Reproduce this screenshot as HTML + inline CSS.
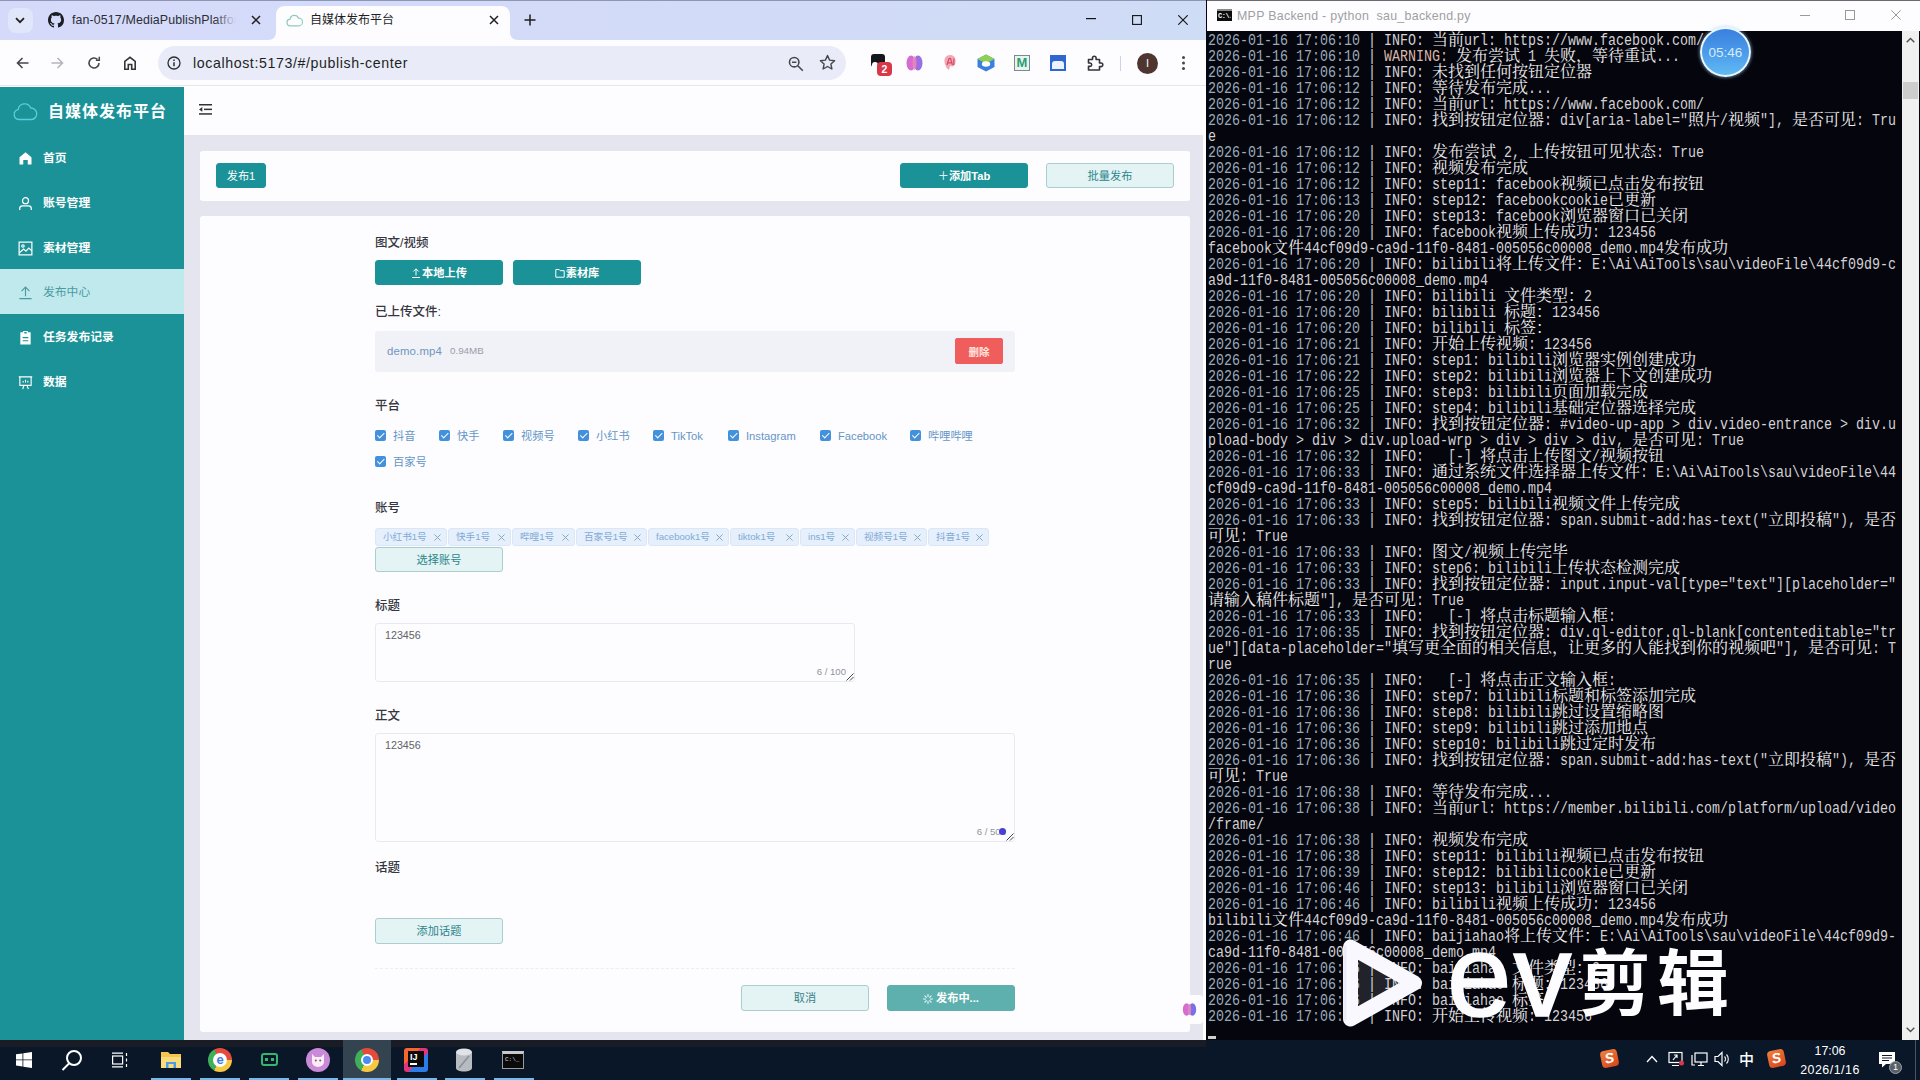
<!DOCTYPE html>
<html lang="zh-CN">
<head>
<meta charset="utf-8">
<title>自媒体发布平台</title>
<style>
*{box-sizing:border-box;margin:0;padding:0}
html,body{width:1920px;height:1080px;overflow:hidden;background:#fff}
body{position:relative;font-family:"Liberation Sans","Noto Sans CJK SC",sans-serif;font-size:11.2px;color:#303133;-webkit-font-smoothing:antialiased}
.abs{position:absolute}
svg{display:block}

/* ---------- Chrome window ---------- */
#chrome{position:absolute;left:0;top:0;width:1206px;height:1040px;background:#fff;overflow:hidden}
#chrome:after{content:'';position:absolute;left:0;top:0;width:1206px;height:1px;background:#8d97b4}
#tabstrip{position:absolute;left:0;top:0;width:1206px;height:40px;background:linear-gradient(90deg,#d6dafa,#cfdcf6)}
#toolbar{position:absolute;left:0;top:40px;width:1206px;height:46px;background:#fdfdff;border-bottom:1px solid #e4e4ec}
#omni{position:absolute;left:158px;top:6px;width:688px;height:34px;border-radius:17px;background:#e9ecf8}
.tabtxt{position:absolute;top:12px;font-size:12px;color:#1f1f1f;white-space:nowrap;line-height:16px}

/* ---------- Page ---------- */
#page{position:absolute;left:0;top:87px;width:1203px;height:953px;background:#e5e5f0;overflow:hidden}
#side{position:absolute;left:0;top:0;width:184px;height:953px;background:#1b9297}
#logo{position:absolute;left:48px;top:14px;font-size:16px;font-weight:700;color:#fff;letter-spacing:1px;line-height:22px;white-space:nowrap}
.mi{position:absolute;left:0;width:184px;height:45px;color:#fff;font-size:11.8px;font-weight:700;line-height:46.500px;white-space:nowrap}
.mi span{position:absolute;left:43px;top:0}
.mi svg{position:absolute;left:18px;top:16px}
.mi.act{background:#c0e9ed;color:#4a9aa1;font-weight:400}
#hdr{position:absolute;left:184px;top:0;width:1021px;height:48px;background:#fdfdff}
.card{position:absolute;background:#fdfdff;border-radius:3px}
.btn{position:absolute;height:25px;border-radius:3px;font-size:11.2px;line-height:23px;padding-top:1px;text-align:center;white-space:nowrap;border:1px solid #1b9297;background:#1b9297;color:#fff;font-weight:700}
.btn.plain{background:#e4f4f5;border-color:#a9cdd0;color:#2b858b;font-weight:400}
.lbl{position:absolute;left:375px;font-size:12.5px;line-height:19px;color:#36363e;white-space:nowrap;font-weight:500}
.cb{position:absolute;height:12px;white-space:nowrap;font-size:11.2px;line-height:12px;color:#6595c6}
.cb i{position:absolute;left:0;top:0;width:11px;height:11px;border-radius:2px;background:#4390dc;display:block}
.cb i:after{content:"";position:absolute;left:3.6px;top:1.2px;width:2.6px;height:5.6px;border:solid #fff;border-width:0 1.2px 1.2px 0;transform:rotate(45deg)}
.cb span{position:absolute;left:18px;top:0}
.tag{position:absolute;top:528px;height:18px;background:#e6effc;border:1px solid #dbe7f8;border-radius:3px;font-size:9.6px;line-height:16px;color:#7fabd6;white-space:nowrap;padding-left:7px}
.tag b{position:absolute;right:6px;top:0;font-weight:400;font-size:11px;color:#7a9cc0}
.ta{position:absolute;border:1px solid #e9e9f3;border-radius:3px;background:#fdfdff}
.ta .v{position:absolute;left:9px;top:4px;font-size:10.7px;color:#606266;line-height:14px}
.ta .n{position:absolute;right:8px;bottom:3px;font-size:9.6px;color:#909399;line-height:12px}

/* ---------- Terminal ---------- */
#term{position:absolute;left:1206px;top:0;width:714px;height:1040px;background:#05050d}
#ttitle{position:absolute;left:1px;top:0;width:713px;height:31px;background:#fdfdff;border-top:1px solid #6a6a72}
#tscroll{position:absolute;left:696px;top:31px;width:17px;height:1009px;background:#f0f0f0}
#tbody{position:absolute;left:2px;top:31px;width:690px;height:1009px;overflow:hidden;color:#d2d2d4}
.r{position:absolute;left:0;height:16px;line-height:16px;white-space:pre;font-family:"Liberation Mono","Noto Serif CJK SC",monospace;font-size:16px}
.r .l{display:inline-block;height:16px;white-space:pre;transform:scaleX(.8333);transform-origin:0 0;width:calc(var(--n)*8px);vertical-align:top}
.r .c{position:relative;top:0px;color:#f0f0f0;display:inline-block;height:16px;width:calc(var(--n)*16px);vertical-align:top;font-family:"Liberation Mono","Noto Serif CJK SC",serif;font-size:16px;font-weight:400;white-space:pre}
.r .t{color:#97acb8}
.r .w{color:#d9b8a6}

/* ---------- Taskbar ---------- */
#task{position:absolute;left:0;top:1040px;width:1920px;height:40px;background:#0a1728}
</style>
</head>
<body>

<!-- ================= CHROME ================= -->
<div id="chrome">
<div id="tabstrip">
  <!-- tab search -->
  <div class="abs" style="left:8px;top:8px;width:25px;height:25px;border-radius:8px;background:#e0e7fa"></div>
  <svg class="abs" style="left:15px;top:17px" width="10" height="7" viewBox="0 0 10 7" fill="none" stroke="#1f1f1f" stroke-width="1.700"><path d="M1 1.200 5 5.200l4-4"/></svg>
  <!-- tab 1 -->
  <svg class="abs" style="left:48px;top:12px" width="16" height="16" viewBox="0 0 16 16"><path fill="#1b1f23" d="M8 0C3.580 0 0 3.580 0 8c0 3.540 2.290 6.530 5.470 7.590.4.070.55-.17.55-.38 0-.19-.01-.82-.01-1.490-2.010.37-2.530-.49-2.690-.94-.09-.23-.48-.94-.82-1.130-.28-.15-.68-.52-.01-.53.63-.01 1.080.58 1.230.82.720 1.210 1.870.87 2.330.66.070-.52.280-.87.510-1.070-1.780-.2-3.640-.89-3.640-3.950 0-.87.310-1.590.820-2.150-.08-.2-.36-1.020.080-2.120 0 0 .67-.21 2.200.82.640-.18 1.320-.27 2-.27s1.360.09 2 .27c1.530-1.040 2.200-.82 2.200-.82.440 1.100.16 1.920.080 2.120.51.56.820 1.270.820 2.150 0 3.070-1.870 3.750-3.650 3.950.29.25.54.73.54 1.480 0 1.070-.01 1.930-.01 2.200 0 .21.15.46.55.38A8.010 8.010 0 0 0 16 8c0-4.420-3.580-8-8-8z"/></svg>
  <div class="tabtxt" style="left:72px;width:166px;overflow:hidden;font-size:12.400px;letter-spacing:.12px;color:#2a2d35">fan-0517/MediaPublishPlatform</div>
  <div class="abs" style="left:214px;top:10px;width:26px;height:20px;background:linear-gradient(90deg,rgba(214,218,250,0),#d6dafa 85%)"></div>
  <svg class="abs" style="left:251px;top:15px" width="10" height="10" viewBox="0 0 10 10" stroke="#1f1f1f" stroke-width="1.500"><path d="M1 1l8 8M9 1 1 9"/></svg>
  <!-- active tab -->
  <svg class="abs" style="left:268px;top:6px" width="250" height="34" viewBox="0 0 250 34"><path fill="#fdfdff" d="M0 34c5 0 8-3 8-8V9c0-5 3-9 9-9h216c6 0 9 4 9 9v17c0 5 3 8 8 8z"/></svg>
  <svg class="abs" style="left:286px;top:13px" width="17" height="14" viewBox="0 0 17 14" fill="none" stroke="#8fcdb2" stroke-width="1.200" stroke-linejoin="round"><path d="M4.500 12.800a3.300 3.300 0 0 1-.4-6.600 4.300 4.300 0 0 1 8.300-1 3.800 3.800 0 0 1 .6 7.600z"/></svg>
  <div class="tabtxt" style="left:310px;color:#1f1f1f">自媒体发布平台</div>
  <svg class="abs" style="left:489px;top:15px" width="10" height="10" viewBox="0 0 10 10" stroke="#1f1f1f" stroke-width="1.500"><path d="M1 1l8 8M9 1 1 9"/></svg>
  <svg class="abs" style="left:524px;top:14px" width="12" height="12" viewBox="0 0 12 12" stroke="#1f1f1f" stroke-width="1.500"><path d="M6 .5v11M.5 6h11"/></svg>
  <!-- window controls -->
  <svg class="abs" style="left:1086px;top:18px" width="10" height="2" viewBox="0 0 10 2"><rect width="10" height="1.200" fill="#111"/></svg>
  <svg class="abs" style="left:1132px;top:15px" width="10" height="10" viewBox="0 0 10 10" fill="none" stroke="#111" stroke-width="1.100"><rect x=".6" y=".6" width="8.800" height="8.800"/></svg>
  <svg class="abs" style="left:1178px;top:15px" width="10" height="10" viewBox="0 0 10 10" stroke="#111" stroke-width="1.100"><path d="M.3.3l9.400 9.400M9.700.3.300 9.700"/></svg>
</div>

<div id="toolbar">
  <!-- nav -->
  <svg class="abs" style="left:16px;top:17px" width="13" height="12" viewBox="0 0 13 12" fill="none" stroke="#45474d" stroke-width="1.600"><path d="M12.500 6H1.500M6.500 1 1.500 6l5 5"/></svg>
  <svg class="abs" style="left:51px;top:17px" width="13" height="12" viewBox="0 0 13 12" fill="none" stroke="#b4b6bf" stroke-width="1.600"><path d="M.5 6h11M6.500 1l5 5-5 5"/></svg>
  <svg class="abs" style="left:87px;top:16px" width="14" height="14" viewBox="0 0 14 14" fill="none" stroke="#45474d" stroke-width="1.600"><path d="M12 7a5 5 0 1 1-1.600-3.700"/><path d="M12.300.8v3.400H8.900" stroke-width="1.500"/></svg>
  <svg class="abs" style="left:123px;top:16px" width="14" height="14" viewBox="0 0 14 14" fill="none" stroke="#33353b" stroke-width="1.600"><path d="M1.800 13.200V5.500L7 1.300l5.200 4.200v7.700H8.700V8.500H5.300v4.700z"/></svg>
  <div id="omni">
    <svg class="abs" style="left:9px;top:10px" width="14" height="14" viewBox="0 0 14 14" fill="none" stroke="#2b2d33" stroke-width="1.300"><circle cx="7" cy="7" r="6"/><path d="M7 6.300v4M7 3.600v1.300" stroke-width="1.500"/></svg>
    <div class="abs" style="left:35px;top:8px;font-size:14.200px;line-height:18px;color:#1f1f1f;white-space:nowrap;letter-spacing:.6px">localhost:5173/#/publish-center</div>
    <svg class="abs" style="left:630px;top:10px" width="16" height="16" viewBox="0 0 16 16" fill="none" stroke="#45474d" stroke-width="1.600"><circle cx="6.200" cy="6.200" r="4.700"/><path d="M9.800 9.800l5 5M4 6.200h4.400" /></svg>
    <svg class="abs" style="left:661px;top:8px" width="17" height="17" viewBox="0 0 17 17" fill="none" stroke="#45474d" stroke-width="1.400" stroke-linejoin="round"><path d="M8.500 1.500l2.100 4.600 5 .6-3.700 3.400 1 4.900-4.400-2.500-4.400 2.500 1-4.900L1.400 6.700l5-.6z"/></svg>
  </div>
  <!-- extensions -->
  <div class="abs" style="left:871px;top:14px;width:14px;height:13px;border-radius:3px;background:#16161c"></div>
  <div class="abs" style="left:872px;top:22px;width:6px;height:5px;border-radius:3px 3px 0 0;background:#fff"></div>
  <div class="abs" style="left:877px;top:22px;width:15px;height:14px;border-radius:4px;background:#d93848;color:#fff;font-size:10.500px;font-weight:700;line-height:14px;text-align:center">2</div>
  <svg class="abs" style="left:906px;top:14px" width="17" height="18" viewBox="0 0 17 18"><ellipse cx="5" cy="9" rx="4.500" ry="7.500" fill="#d66bd0"/><ellipse cx="12" cy="9" rx="4.500" ry="7.500" fill="#9a6fe0"/><ellipse cx="8.500" cy="9" rx="2" ry="7" fill="#f08ab8" opacity=".8"/></svg>
  <svg class="abs" style="left:943px;top:14px" width="14" height="18" viewBox="0 0 14 18"><path d="M7 1C3.500 1 1 4 1.500 8c.3 2.500 1.500 4 2 6l2.500 2 1-4 3 .5c2-1 3-4 2.500-7C12 2.500 10 1 7 1z" fill="#f2a8b0"/><path d="M4 11 6 4.500h1.500L9.500 11M4.800 8.800h3.800M10.800 4.500V11" stroke="#d94a6a" stroke-width="1.200" fill="none"/></svg>
  <svg class="abs" style="left:976px;top:14px" width="20" height="18" viewBox="0 0 20 18"><path d="M10 .5 18.500 5v8L10 17.500 1.500 13V5z" fill="#3b7fe0"/><path d="M10 .5 18.500 5 10 9.500 1.500 5z" fill="#8fd14f"/><ellipse cx="10" cy="10" rx="4.200" ry="2.800" fill="#fdfdff"/></svg>
  <div class="abs" style="left:1014px;top:15px;width:16px;height:16px;border:1px solid #7a8a90;background:#e8f4f0;color:#2f9e6e;font-size:13px;font-weight:700;line-height:14px;text-align:center">M</div>
  <div class="abs" style="left:1050px;top:15px;width:16px;height:16px;background:#2f66d0"></div>
  <div class="abs" style="left:1052px;top:21px;width:12px;height:8px;background:#eef2fb;border-radius:3px 3px 0 0"></div>
  <svg class="abs" style="left:1086px;top:14px" width="18" height="18" viewBox="0 0 18 18" fill="none" stroke="#33353b" stroke-width="1.600" stroke-linejoin="round"><path d="M2.500 5.500h4V4a1.800 1.800 0 0 1 3.600 0v1.500h3.400V9H15a1.800 1.800 0 0 1 0 3.600h-1.500v3.400h-11v-3.600H4A1.700 1.700 0 0 0 4 9H2.500z"/></svg>
  <div class="abs" style="left:1120px;top:16px;width:1px;height:15px;background:#c9d3ea"></div>
  <div class="abs" style="left:1137px;top:13px;width:21px;height:21px;border-radius:50%;background:#4f3530;color:#fff;font-size:11px;line-height:21px;text-align:center">I</div>
  <div class="abs" style="left:1182px;top:16px;width:3px;height:3px;border-radius:50%;background:#45474d;box-shadow:0 5.500px 0 #45474d,0 11px 0 #45474d"></div>
</div>

<div id="page">
<div id="side">
  <svg class="abs" style="left:12px;top:12px" width="26" height="24" viewBox="0 0 26 24" fill="none" stroke="#55d0dc" stroke-width="1.3" stroke-linejoin="round"><path d="M7 20.5a5 5 0 0 1-.8-9.9 6.5 6.5 0 0 1 12.5-1.6 5.8 5.8 0 0 1 1.300 11.500z"/></svg>
  <div id="logo">自媒体发布平台</div>

  <div class="mi" style="top:48px"><svg width="15" height="15" viewBox="0 0 16 16"><path fill="#fff" d="M8 1.200 1.600 6.700V14.500h4V9.600h4.800v4.900h4V6.700z"/></svg><span>首页</span></div>
  <div class="mi" style="top:93px"><svg width="15" height="15" viewBox="0 0 16 16" fill="none" stroke="#fff" stroke-width="1.300"><circle cx="8" cy="5" r="3.200"/><path d="M1.800 15v-1.500a3 3 0 0 1 3-3h6.400a3 3 0 0 1 3 3V15"/></svg><span>账号管理</span></div>
  <div class="mi" style="top:138px"><svg width="15" height="15" viewBox="0 0 16 16" fill="none" stroke="#fff" stroke-width="1.300"><rect x="1.200" y="1.200" width="13.600" height="13.600"/><circle cx="5.300" cy="5.300" r="1.300"/><path d="M1.500 12.500 6 8.500l2.500 2.300 3-3.300 3.300 3"/></svg><span>素材管理</span></div>
  <div class="mi act" style="top:182px"><svg width="15" height="15" viewBox="0 0 16 16" fill="none" stroke="#4a9aa1" stroke-width="1.200"><path d="M1.500 14.500h13M8 12V2.500M3.800 6.500 8 2.300l4.200 4.200"/></svg><span>发布中心</span></div>
  <div class="mi" style="top:227px"><svg width="15" height="15" viewBox="0 0 16 16"><path fill="#fff" d="M5.500 1h5v1.500h3V15.500h-11V2.500h3zM6.700 2.200v1.600h2.600V2.200zM5 7.500v1.200h6V7.500zM5 10.800V12h6v-1.200z"/></svg><span>任务发布记录</span></div>
  <div class="mi" style="top:272px"><svg width="15" height="15" viewBox="0 0 16 16" fill="none" stroke="#fff" stroke-width="1.200"><path d="M.8 2h14.400M2 2v9h12V2M5 15l1.300-4M11 15l-1.300-4M5.500 8V6.500M8 8V5M10.500 8V6"/></svg><span>数据</span></div>
</div>

<div id="hdr">
  <svg class="abs" style="left:15px;top:17px" width="13" height="11" viewBox="0 0 13 11" fill="#303133"><rect x="0" y="0" width="13" height="1.500"/><rect x="5" y="4.600" width="8" height="1.500"/><rect x="0" y="9.200" width="13" height="1.500"/><path d="M0 5.400 3.300 3v4.800z"/></svg>
</div>

<!-- tab card -->
<div class="card" style="left:200px;top:64px;width:990px;height:50px"></div>
<div class="btn" style="left:216px;top:76px;width:50px;height:25px;font-weight:400">发布1</div>
<div class="btn" style="left:900px;top:76px;width:128px"><span style="font-weight:400">＋</span>添加Tab</div>
<div class="btn plain" style="left:1046px;top:76px;width:128px">批量发布</div>

<!-- form card -->
<div class="card" style="left:200px;top:129px;width:990px;height:816px"></div>

<div class="lbl" style="top:147px">图文/视频</div>
<div class="btn" style="left:375px;top:173px;width:128px"><svg style="display:inline-block;vertical-align:-1px;margin-right:1px" width="10" height="10" viewBox="0 0 10 10" fill="none" stroke="#fff" stroke-width="1"><path d="M1 9.500h8M5 7.500V1M2.300 3.500 5 .8l2.700 2.700"/></svg>本地上传</div>
<div class="btn" style="left:513px;top:173px;width:128px"><svg style="display:inline-block;vertical-align:-1px;margin-right:1px" width="10" height="10" viewBox="0 0 10 10" fill="none" stroke="#fff" stroke-width="1"><path d="M.8 1.500h3.400l1 1.200h4v6.500H.8z"/></svg>素材库</div>

<div class="lbl" style="top:216px">已上传文件:</div>
<div class="abs" style="left:375px;top:244px;width:640px;height:41px;background:#f1f1f8;border-radius:3px"></div>
<div class="abs" style="left:387px;top:257px;font-size:11.4px;letter-spacing:.15px;line-height:14px;color:#6f97bd;white-space:nowrap">demo.mp4</div>
<div class="abs" style="left:450px;top:258px;font-size:9.8px;line-height:12px;color:#9a9cab;white-space:nowrap">0.94MB</div>
<div class="btn" style="left:955px;top:251px;width:48px;height:26px;line-height:24px;background:#ef5d5d;border-color:#ef5d5d;border-radius:2px;color:#ffe4dc;font-size:10.5px">删除</div>

<div class="lbl" style="top:310px">平台</div>
<div class="cb" style="left:375px;top:343px"><i></i><span>抖音</span></div>
<div class="cb" style="left:439px;top:343px"><i></i><span>快手</span></div>
<div class="cb" style="left:503px;top:343px"><i></i><span>视频号</span></div>
<div class="cb" style="left:578px;top:343px"><i></i><span>小红书</span></div>
<div class="cb" style="left:653px;top:343px"><i></i><span>TikTok</span></div>
<div class="cb" style="left:728px;top:343px"><i></i><span>Instagram</span></div>
<div class="cb" style="left:820px;top:343px"><i></i><span>Facebook</span></div>
<div class="cb" style="left:910px;top:343px"><i></i><span>哔哩哔哩</span></div>
<div class="cb" style="left:375px;top:369px"><i></i><span>百家号</span></div>

<div class="lbl" style="top:412px">账号</div>
<div class="tag" style="left:375px;top:441px;width:72px">小红书1号<svg class="abs" style="right:5px;top:5px" width="7" height="7" viewBox="0 0 7 7" stroke="#7f9fc2" stroke-width=".9" fill="none"><path d="M.4.400l6.200 6.200M6.600.400.400 6.600"/></svg></div>
<div class="tag" style="left:448px;top:441px;width:63px">快手1号<svg class="abs" style="right:5px;top:5px" width="7" height="7" viewBox="0 0 7 7" stroke="#7f9fc2" stroke-width=".9" fill="none"><path d="M.4.400l6.200 6.200M6.600.400.400 6.600"/></svg></div>
<div class="tag" style="left:512px;top:441px;width:63px">哔哩1号<svg class="abs" style="right:5px;top:5px" width="7" height="7" viewBox="0 0 7 7" stroke="#7f9fc2" stroke-width=".9" fill="none"><path d="M.4.400l6.200 6.200M6.600.400.400 6.600"/></svg></div>
<div class="tag" style="left:576px;top:441px;width:71px">百家号1号<svg class="abs" style="right:5px;top:5px" width="7" height="7" viewBox="0 0 7 7" stroke="#7f9fc2" stroke-width=".9" fill="none"><path d="M.4.400l6.200 6.200M6.600.400.400 6.600"/></svg></div>
<div class="tag" style="left:648px;top:441px;width:81px">facebook1号<svg class="abs" style="right:5px;top:5px" width="7" height="7" viewBox="0 0 7 7" stroke="#7f9fc2" stroke-width=".9" fill="none"><path d="M.4.400l6.200 6.200M6.600.400.400 6.600"/></svg></div>
<div class="tag" style="left:730px;top:441px;width:69px">tiktok1号<svg class="abs" style="right:5px;top:5px" width="7" height="7" viewBox="0 0 7 7" stroke="#7f9fc2" stroke-width=".9" fill="none"><path d="M.4.400l6.200 6.200M6.600.400.400 6.600"/></svg></div>
<div class="tag" style="left:800px;top:441px;width:55px">ins1号<svg class="abs" style="right:5px;top:5px" width="7" height="7" viewBox="0 0 7 7" stroke="#7f9fc2" stroke-width=".9" fill="none"><path d="M.4.400l6.200 6.200M6.600.400.400 6.600"/></svg></div>
<div class="tag" style="left:856px;top:441px;width:71px">视频号1号<svg class="abs" style="right:5px;top:5px" width="7" height="7" viewBox="0 0 7 7" stroke="#7f9fc2" stroke-width=".9" fill="none"><path d="M.4.400l6.200 6.200M6.600.400.400 6.600"/></svg></div>
<div class="tag" style="left:928px;top:441px;width:61px">抖音1号<svg class="abs" style="right:5px;top:5px" width="7" height="7" viewBox="0 0 7 7" stroke="#7f9fc2" stroke-width=".9" fill="none"><path d="M.4.400l6.200 6.200M6.600.400.400 6.600"/></svg></div>
<div class="btn plain" style="left:375px;top:460px;width:128px">选择账号</div>

<div class="lbl" style="top:510px">标题</div>
<div class="ta" style="left:375px;top:536px;width:480px;height:59px"><div class="v">123456</div><div class="n">6 / 100</div><svg class="abs" style="right:0;bottom:0" width="8" height="8" viewBox="0 0 8 8" stroke="#444" stroke-width="1"><path d="M.5 7.500l7-7M4 7.500 7.500 4"/></svg></div>

<div class="lbl" style="top:620px">正文</div>
<div class="ta" style="left:375px;top:646px;width:640px;height:109px"><div class="v">123456</div><div class="n">6 / 500</div><svg class="abs" style="right:0;bottom:0" width="8" height="8" viewBox="0 0 8 8" stroke="#444" stroke-width="1"><path d="M.5 7.500l7-7M4 7.500 7.500 4"/></svg></div>

<div class="lbl" style="top:772px">话题</div>
<div class="btn plain" style="left:375px;top:831px;width:128px;height:26px">添加话题</div>

<div class="abs" style="left:375px;top:881px;width:640px;height:0;border-top:1px dashed #ececf4"></div>
<div class="btn plain" style="left:741px;top:898px;width:128px;height:26px;color:#3b8087">取消</div>
<div class="btn" style="left:887px;top:898px;width:128px;height:26px;background:#5eb0af;border-color:#5eb0af"><svg style="display:inline-block;vertical-align:-1.5px;margin-right:3px" width="10" height="10" viewBox="0 0 10 10" stroke="#e8fbfb" stroke-width="1.1" stroke-linecap="round"><path d="M5 .6v2M5 7.400v2M.6 5h2M7.400 5h2M1.900 1.900l1.400 1.400M6.700 6.700l1.400 1.400M1.900 8.100l1.400-1.400M6.700 3.300l1.400-1.400"/></svg>发布中...</div>

</div>
</div>

<!-- ================= TERMINAL ================= -->
<div id="term">
<div id="ttitle">
  <div class="abs" style="left:10px;top:8px;width:15px;height:12px;background:#0c0c0c;border-top:2px solid #8a8a8a"></div>
  <div class="abs" style="left:11px;top:11px;width:13px;font-family:'Liberation Mono',monospace;font-size:7px;font-weight:700;color:#fff;line-height:8px;letter-spacing:-.5px;white-space:nowrap;overflow:hidden">C:\.</div>
  <div class="abs" style="left:30px;top:7px;font-size:12.4px;letter-spacing:.28px;line-height:16px;color:#a0a0a4;white-space:pre">MPP Backend - python  sau_backend.py</div>
  <svg class="abs" style="left:593px;top:14px" width="10" height="2" viewBox="0 0 10 2"><rect width="10" height="1" fill="#9a9a9a"/></svg>
  <svg class="abs" style="left:638px;top:9px" width="10" height="10" viewBox="0 0 10 10" fill="none" stroke="#9a9a9a" stroke-width="1"><rect x=".5" y=".5" width="9" height="9"/></svg>
  <svg class="abs" style="left:684px;top:9px" width="10" height="10" viewBox="0 0 10 10" stroke="#9a9a9a" stroke-width="1"><path d="M.3.3l9.400 9.400M9.700.3.300 9.700"/></svg>

</div>
<div id="tscroll">
  <svg class="abs" style="left:4px;top:6px" width="9" height="6" viewBox="0 0 9 6" fill="none" stroke="#505050" stroke-width="1.400"><path d="M.7 5.200 4.500 1.400l3.800 3.800"/></svg>
  <div class="abs" style="left:1px;top:51px;width:15px;height:17px;background:#cdcdcd"></div>
  <svg class="abs" style="left:4px;top:996px" width="9" height="6" viewBox="0 0 9 6" fill="none" stroke="#505050" stroke-width="1.400"><path d="M.7.8 4.500 4.600 8.300.8"/></svg>

</div>
<div id="tbody">
<div class="r" style="top:2px"><span class="l t" style="--n:19">2026-01-16 17:06:10</span><span class="l" style="--n:3"> | </span><span class="l" style="--n:6">INFO: </span><span class="c" style="--n:2">当前</span><span class="l" style="--n:11">url: https:</span><span class="l" style="--n:19">//www.facebook.com/</span></div>
<div class="r" style="top:18px"><span class="l t" style="--n:19">2026-01-16 17:06:10</span><span class="l" style="--n:3"> | </span><span class="l w" style="--n:9">WARNING: </span><span class="c" style="--n:4">发布尝试</span><span class="l" style="--n:3"> 1 </span><span class="c" style="--n:7">失败，等待重试</span><span class="l" style="--n:3">...</span></div>
<div class="r" style="top:34px"><span class="l t" style="--n:19">2026-01-16 17:06:12</span><span class="l" style="--n:3"> | </span><span class="l" style="--n:6">INFO: </span><span class="c" style="--n:10">未找到任何按钮定位器</span></div>
<div class="r" style="top:50px"><span class="l t" style="--n:19">2026-01-16 17:06:12</span><span class="l" style="--n:3"> | </span><span class="l" style="--n:6">INFO: </span><span class="c" style="--n:6">等待发布完成</span><span class="l" style="--n:3">...</span></div>
<div class="r" style="top:66px"><span class="l t" style="--n:19">2026-01-16 17:06:12</span><span class="l" style="--n:3"> | </span><span class="l" style="--n:6">INFO: </span><span class="c" style="--n:2">当前</span><span class="l" style="--n:11">url: https:</span><span class="l" style="--n:19">//www.facebook.com/</span></div>
<div class="r" style="top:82px"><span class="l t" style="--n:19">2026-01-16 17:06:12</span><span class="l" style="--n:3"> | </span><span class="l" style="--n:6">INFO: </span><span class="c" style="--n:7">找到按钮定位器</span><span class="l" style="--n:18">: div[aria-label="</span><span class="c" style="--n:2">照片</span><span class="l" style="--n:1">/</span><span class="c" style="--n:2">视频</span><span class="l" style="--n:4">"], </span><span class="c" style="--n:4">是否可见</span><span class="l" style="--n:5">: Tru</span></div>
<div class="r" style="top:98px"><span class="l" style="--n:1">e</span></div>
<div class="r" style="top:114px"><span class="l t" style="--n:19">2026-01-16 17:06:12</span><span class="l" style="--n:3"> | </span><span class="l" style="--n:6">INFO: </span><span class="c" style="--n:4">发布尝试</span><span class="l" style="--n:4"> 2, </span><span class="c" style="--n:8">上传按钮可见状态</span><span class="l" style="--n:6">: True</span></div>
<div class="r" style="top:130px"><span class="l t" style="--n:19">2026-01-16 17:06:12</span><span class="l" style="--n:3"> | </span><span class="l" style="--n:6">INFO: </span><span class="c" style="--n:6">视频发布完成</span></div>
<div class="r" style="top:146px"><span class="l t" style="--n:19">2026-01-16 17:06:12</span><span class="l" style="--n:3"> | </span><span class="l" style="--n:6">INFO: </span><span class="l" style="--n:6">step11</span><span class="c" style="--n:1">：</span><span class="l" style="--n:8">facebook</span><span class="c" style="--n:9">视频已点击发布按钮</span></div>
<div class="r" style="top:162px"><span class="l t" style="--n:19">2026-01-16 17:06:13</span><span class="l" style="--n:3"> | </span><span class="l" style="--n:6">INFO: </span><span class="l" style="--n:6">step12</span><span class="c" style="--n:1">：</span><span class="l" style="--n:14">facebookcookie</span><span class="c" style="--n:3">已更新</span></div>
<div class="r" style="top:178px"><span class="l t" style="--n:19">2026-01-16 17:06:20</span><span class="l" style="--n:3"> | </span><span class="l" style="--n:6">INFO: </span><span class="l" style="--n:6">step13</span><span class="c" style="--n:1">：</span><span class="l" style="--n:8">facebook</span><span class="c" style="--n:8">浏览器窗口已关闭</span></div>
<div class="r" style="top:194px"><span class="l t" style="--n:19">2026-01-16 17:06:20</span><span class="l" style="--n:3"> | </span><span class="l" style="--n:6">INFO: </span><span class="l" style="--n:8">facebook</span><span class="c" style="--n:6">视频上传成功</span><span class="l" style="--n:8">: 123456</span></div>
<div class="r" style="top:210px"><span class="l" style="--n:8">facebook</span><span class="c" style="--n:2">文件</span><span class="l" style="--n:45">44cf09d9-ca9d-11f0-8481-005056c00008_demo.mp4</span><span class="c" style="--n:4">发布成功</span></div>
<div class="r" style="top:226px"><span class="l t" style="--n:19">2026-01-16 17:06:20</span><span class="l" style="--n:3"> | </span><span class="l" style="--n:6">INFO: </span><span class="l" style="--n:8">bilibili</span><span class="c" style="--n:6">将上传文件：</span><span class="l" style="--n:38">E:\Ai\AiTools\sau\videoFile\44cf09d9-c</span></div>
<div class="r" style="top:242px"><span class="l" style="--n:35">a9d-11f0-8481-005056c00008_demo.mp4</span></div>
<div class="r" style="top:258px"><span class="l t" style="--n:19">2026-01-16 17:06:20</span><span class="l" style="--n:3"> | </span><span class="l" style="--n:6">INFO: </span><span class="l" style="--n:9">bilibili </span><span class="c" style="--n:5">文件类型：</span><span class="l" style="--n:1">2</span></div>
<div class="r" style="top:274px"><span class="l t" style="--n:19">2026-01-16 17:06:20</span><span class="l" style="--n:3"> | </span><span class="l" style="--n:6">INFO: </span><span class="l" style="--n:9">bilibili </span><span class="c" style="--n:3">标题：</span><span class="l" style="--n:6">123456</span></div>
<div class="r" style="top:290px"><span class="l t" style="--n:19">2026-01-16 17:06:20</span><span class="l" style="--n:3"> | </span><span class="l" style="--n:6">INFO: </span><span class="l" style="--n:9">bilibili </span><span class="c" style="--n:3">标签：</span></div>
<div class="r" style="top:306px"><span class="l t" style="--n:19">2026-01-16 17:06:21</span><span class="l" style="--n:3"> | </span><span class="l" style="--n:6">INFO: </span><span class="c" style="--n:6">开始上传视频</span><span class="l" style="--n:8">: 123456</span></div>
<div class="r" style="top:322px"><span class="l t" style="--n:19">2026-01-16 17:06:21</span><span class="l" style="--n:3"> | </span><span class="l" style="--n:6">INFO: </span><span class="l" style="--n:15">step1: bilibili</span><span class="c" style="--n:9">浏览器实例创建成功</span></div>
<div class="r" style="top:338px"><span class="l t" style="--n:19">2026-01-16 17:06:22</span><span class="l" style="--n:3"> | </span><span class="l" style="--n:6">INFO: </span><span class="l" style="--n:15">step2: bilibili</span><span class="c" style="--n:10">浏览器上下文创建成功</span></div>
<div class="r" style="top:354px"><span class="l t" style="--n:19">2026-01-16 17:06:25</span><span class="l" style="--n:3"> | </span><span class="l" style="--n:6">INFO: </span><span class="l" style="--n:15">step3: bilibili</span><span class="c" style="--n:6">页面加载完成</span></div>
<div class="r" style="top:370px"><span class="l t" style="--n:19">2026-01-16 17:06:25</span><span class="l" style="--n:3"> | </span><span class="l" style="--n:6">INFO: </span><span class="l" style="--n:15">step4: bilibili</span><span class="c" style="--n:9">基础定位器选择完成</span></div>
<div class="r" style="top:386px"><span class="l t" style="--n:19">2026-01-16 17:06:32</span><span class="l" style="--n:3"> | </span><span class="l" style="--n:6">INFO: </span><span class="c" style="--n:7">找到按钮定位器</span><span class="l" style="--n:44">: #video-up-app &gt; div.video-entrance &gt; div.u</span></div>
<div class="r" style="top:402px"><span class="l" style="--n:53">pload-body &gt; div &gt; div.upload-wrp &gt; div &gt; div &gt; div, </span><span class="c" style="--n:4">是否可见</span><span class="l" style="--n:6">: True</span></div>
<div class="r" style="top:418px"><span class="l t" style="--n:19">2026-01-16 17:06:32</span><span class="l" style="--n:3"> | </span><span class="l" style="--n:6">INFO: </span><span class="l" style="--n:6">  [-] </span><span class="c" style="--n:7">将点击上传图文</span><span class="l" style="--n:1">/</span><span class="c" style="--n:4">视频按钮</span></div>
<div class="r" style="top:434px"><span class="l t" style="--n:19">2026-01-16 17:06:33</span><span class="l" style="--n:3"> | </span><span class="l" style="--n:6">INFO: </span><span class="c" style="--n:13">通过系统文件选择器上传文件</span><span class="l" style="--n:32">: E:\Ai\AiTools\sau\videoFile\44</span></div>
<div class="r" style="top:450px"><span class="l" style="--n:43">cf09d9-ca9d-11f0-8481-005056c00008_demo.mp4</span></div>
<div class="r" style="top:466px"><span class="l t" style="--n:19">2026-01-16 17:06:33</span><span class="l" style="--n:3"> | </span><span class="l" style="--n:6">INFO: </span><span class="l" style="--n:15">step5: bilibili</span><span class="c" style="--n:8">视频文件上传完成</span></div>
<div class="r" style="top:482px"><span class="l t" style="--n:19">2026-01-16 17:06:33</span><span class="l" style="--n:3"> | </span><span class="l" style="--n:6">INFO: </span><span class="c" style="--n:7">找到按钮定位器</span><span class="l" style="--n:28">: span.submit-add:has-text("</span><span class="c" style="--n:4">立即投稿</span><span class="l" style="--n:4">"), </span><span class="c" style="--n:2">是否</span></div>
<div class="r" style="top:498px"><span class="c" style="--n:2">可见</span><span class="l" style="--n:6">: True</span></div>
<div class="r" style="top:514px"><span class="l t" style="--n:19">2026-01-16 17:06:33</span><span class="l" style="--n:3"> | </span><span class="l" style="--n:6">INFO: </span><span class="c" style="--n:2">图文</span><span class="l" style="--n:1">/</span><span class="c" style="--n:6">视频上传完毕</span></div>
<div class="r" style="top:530px"><span class="l t" style="--n:19">2026-01-16 17:06:33</span><span class="l" style="--n:3"> | </span><span class="l" style="--n:6">INFO: </span><span class="l" style="--n:15">step6: bilibili</span><span class="c" style="--n:8">上传状态检测完成</span></div>
<div class="r" style="top:546px"><span class="l t" style="--n:19">2026-01-16 17:06:33</span><span class="l" style="--n:3"> | </span><span class="l" style="--n:6">INFO: </span><span class="c" style="--n:7">找到按钮定位器</span><span class="l" style="--n:44">: input.input-val[type="text"][placeholder="</span></div>
<div class="r" style="top:562px"><span class="c" style="--n:7">请输入稿件标题</span><span class="l" style="--n:4">"], </span><span class="c" style="--n:4">是否可见</span><span class="l" style="--n:6">: True</span></div>
<div class="r" style="top:578px"><span class="l t" style="--n:19">2026-01-16 17:06:33</span><span class="l" style="--n:3"> | </span><span class="l" style="--n:6">INFO: </span><span class="l" style="--n:6">  [-] </span><span class="c" style="--n:8">将点击标题输入框</span><span class="l" style="--n:1">:</span></div>
<div class="r" style="top:594px"><span class="l t" style="--n:19">2026-01-16 17:06:35</span><span class="l" style="--n:3"> | </span><span class="l" style="--n:6">INFO: </span><span class="c" style="--n:7">找到按钮定位器</span><span class="l" style="--n:44">: div.ql-editor.ql-blank[contenteditable="tr</span></div>
<div class="r" style="top:610px"><span class="l" style="--n:23">ue"][data-placeholder="</span><span class="c" style="--n:24">填写更全面的相关信息，让更多的人能找到你的视频吧</span><span class="l" style="--n:4">"], </span><span class="c" style="--n:4">是否可见</span><span class="l" style="--n:3">: T</span></div>
<div class="r" style="top:626px"><span class="l" style="--n:3">rue</span></div>
<div class="r" style="top:642px"><span class="l t" style="--n:19">2026-01-16 17:06:35</span><span class="l" style="--n:3"> | </span><span class="l" style="--n:6">INFO: </span><span class="l" style="--n:6">  [-] </span><span class="c" style="--n:8">将点击正文输入框</span><span class="l" style="--n:1">:</span></div>
<div class="r" style="top:658px"><span class="l t" style="--n:19">2026-01-16 17:06:36</span><span class="l" style="--n:3"> | </span><span class="l" style="--n:6">INFO: </span><span class="l" style="--n:15">step7: bilibili</span><span class="c" style="--n:9">标题和标签添加完成</span></div>
<div class="r" style="top:674px"><span class="l t" style="--n:19">2026-01-16 17:06:36</span><span class="l" style="--n:3"> | </span><span class="l" style="--n:6">INFO: </span><span class="l" style="--n:15">step8: bilibili</span><span class="c" style="--n:7">跳过设置缩略图</span></div>
<div class="r" style="top:690px"><span class="l t" style="--n:19">2026-01-16 17:06:36</span><span class="l" style="--n:3"> | </span><span class="l" style="--n:6">INFO: </span><span class="l" style="--n:15">step9: bilibili</span><span class="c" style="--n:6">跳过添加地点</span></div>
<div class="r" style="top:706px"><span class="l t" style="--n:19">2026-01-16 17:06:36</span><span class="l" style="--n:3"> | </span><span class="l" style="--n:6">INFO: </span><span class="l" style="--n:16">step10: bilibili</span><span class="c" style="--n:6">跳过定时发布</span></div>
<div class="r" style="top:722px"><span class="l t" style="--n:19">2026-01-16 17:06:36</span><span class="l" style="--n:3"> | </span><span class="l" style="--n:6">INFO: </span><span class="c" style="--n:7">找到按钮定位器</span><span class="l" style="--n:28">: span.submit-add:has-text("</span><span class="c" style="--n:4">立即投稿</span><span class="l" style="--n:4">"), </span><span class="c" style="--n:2">是否</span></div>
<div class="r" style="top:738px"><span class="c" style="--n:2">可见</span><span class="l" style="--n:6">: True</span></div>
<div class="r" style="top:754px"><span class="l t" style="--n:19">2026-01-16 17:06:38</span><span class="l" style="--n:3"> | </span><span class="l" style="--n:6">INFO: </span><span class="c" style="--n:6">等待发布完成</span><span class="l" style="--n:3">...</span></div>
<div class="r" style="top:770px"><span class="l t" style="--n:19">2026-01-16 17:06:38</span><span class="l" style="--n:3"> | </span><span class="l" style="--n:6">INFO: </span><span class="c" style="--n:2">当前</span><span class="l" style="--n:11">url: https:</span><span class="l" style="--n:43">//member.bilibili.com/platform/upload/video</span></div>
<div class="r" style="top:786px"><span class="l" style="--n:7">/frame/</span></div>
<div class="r" style="top:802px"><span class="l t" style="--n:19">2026-01-16 17:06:38</span><span class="l" style="--n:3"> | </span><span class="l" style="--n:6">INFO: </span><span class="c" style="--n:6">视频发布完成</span></div>
<div class="r" style="top:818px"><span class="l t" style="--n:19">2026-01-16 17:06:38</span><span class="l" style="--n:3"> | </span><span class="l" style="--n:6">INFO: </span><span class="l" style="--n:6">step11</span><span class="c" style="--n:1">：</span><span class="l" style="--n:8">bilibili</span><span class="c" style="--n:9">视频已点击发布按钮</span></div>
<div class="r" style="top:834px"><span class="l t" style="--n:19">2026-01-16 17:06:39</span><span class="l" style="--n:3"> | </span><span class="l" style="--n:6">INFO: </span><span class="l" style="--n:6">step12</span><span class="c" style="--n:1">：</span><span class="l" style="--n:14">bilibilicookie</span><span class="c" style="--n:3">已更新</span></div>
<div class="r" style="top:850px"><span class="l t" style="--n:19">2026-01-16 17:06:46</span><span class="l" style="--n:3"> | </span><span class="l" style="--n:6">INFO: </span><span class="l" style="--n:6">step13</span><span class="c" style="--n:1">：</span><span class="l" style="--n:8">bilibili</span><span class="c" style="--n:8">浏览器窗口已关闭</span></div>
<div class="r" style="top:866px"><span class="l t" style="--n:19">2026-01-16 17:06:46</span><span class="l" style="--n:3"> | </span><span class="l" style="--n:6">INFO: </span><span class="l" style="--n:8">bilibili</span><span class="c" style="--n:6">视频上传成功</span><span class="l" style="--n:8">: 123456</span></div>
<div class="r" style="top:882px"><span class="l" style="--n:8">bilibili</span><span class="c" style="--n:2">文件</span><span class="l" style="--n:45">44cf09d9-ca9d-11f0-8481-005056c00008_demo.mp4</span><span class="c" style="--n:4">发布成功</span></div>
<div class="r" style="top:898px"><span class="l t" style="--n:19">2026-01-16 17:06:46</span><span class="l" style="--n:3"> | </span><span class="l" style="--n:6">INFO: </span><span class="l" style="--n:9">baijiahao</span><span class="c" style="--n:6">将上传文件：</span><span class="l" style="--n:37">E:\Ai\AiTools\sau\videoFile\44cf09d9-</span></div>
<div class="r" style="top:914px"><span class="l" style="--n:36">ca9d-11f0-8481-005056c00008_demo.mp4</span></div>
<div class="r" style="top:930px"><span class="l t" style="--n:19">2026-01-16 17:06:46</span><span class="l" style="--n:3"> | </span><span class="l" style="--n:6">INFO: </span><span class="l" style="--n:10">baijiahao </span><span class="c" style="--n:5">文件类型：</span><span class="l" style="--n:1">2</span></div>
<div class="r" style="top:946px"><span class="l t" style="--n:19">2026-01-16 17:06:46</span><span class="l" style="--n:3"> | </span><span class="l" style="--n:6">INFO: </span><span class="l" style="--n:10">baijiahao </span><span class="c" style="--n:3">标题：</span><span class="l" style="--n:6">123456</span></div>
<div class="r" style="top:962px"><span class="l t" style="--n:19">2026-01-16 17:06:46</span><span class="l" style="--n:3"> | </span><span class="l" style="--n:6">INFO: </span><span class="l" style="--n:10">baijiahao </span><span class="c" style="--n:3">标签：</span></div>
<div class="r" style="top:978px"><span class="l t" style="--n:19">2026-01-16 17:06:46</span><span class="l" style="--n:3"> | </span><span class="l" style="--n:6">INFO: </span><span class="c" style="--n:6">开始上传视频</span><span class="l" style="--n:8">: 123456</span></div>
<div class="abs" style="left:0;top:1005px;width:8px;height:3px;background:#cfcfcf"></div>
</div>
</div>

<!-- ================= TASKBAR ================= -->
<div id="task">
  <div class="abs" style="left:0;top:0;width:1206px;height:7px;background:#191c24"></div>
  <!-- start -->
  <svg class="abs" style="left:16px;top:12px" width="16" height="16" viewBox="0 0 16 16" fill="#fff"><path d="M0 2.300 6.500 1.400v6.100H0zM7.300 1.300 16 0v7.500H7.300zM0 8.300h6.500v6.200L0 13.600zM7.300 8.300H16V16l-8.700-1.300z"/></svg>
  <!-- search -->
  <svg class="abs" style="left:61px;top:9px" width="22" height="22" viewBox="0 0 22 22" fill="none" stroke="#fff" stroke-width="2"><circle cx="13" cy="9" r="7"/><path d="M8 14.500 1.500 21"/></svg>
  <!-- task view -->
  <svg class="abs" style="left:111px;top:12px" width="18" height="16" viewBox="0 0 18 16" fill="none" stroke="#fff" stroke-width="1.200"><rect x="1.600" y="4" width="10" height="8"/><path d="M1 1.200h11M1 14.800h11M15.500 1v3M15.500 6.500v3M15.500 12v3"/></svg>
  <!-- explorer -->
  <svg class="abs" style="left:160px;top:10px" width="22" height="20" viewBox="0 0 22 20"><path d="M1 2h7l2 2h11v14H1z" fill="#f6c64f"/><path d="M1 7h20v11H1z" fill="#fbdc7c"/><path d="M6 12h10v6H6z" fill="#4a9be8"/><path d="M8.500 14h5v4h-5z" fill="#fbdc7c"/></svg>
  <div class="abs" style="left:151px;top:38px;width:40px;height:2px;background:#76b9ed"></div>
  <!-- e chrome -->
  <div class="abs" style="left:208px;top:8px;width:24px;height:24px;border-radius:50%;background:conic-gradient(from -30deg,#e44b3c 0 120deg,#f7c940 120deg 240deg,#3faf5a 240deg 360deg)"></div>
  <div class="abs" style="left:213px;top:13px;width:14px;height:14px;border-radius:50%;background:#fdfdff;color:#3b7be0;font-size:13px;font-weight:700;line-height:13px;text-align:center">e</div>
  <div class="abs" style="left:200px;top:38px;width:40px;height:2px;background:#76b9ed"></div>
  <!-- green bot -->
  <div class="abs" style="left:261px;top:13px;width:17px;height:13px;border-radius:3px;border:2px solid #35b56f;background:#0a1728"></div>
  <div class="abs" style="left:265px;top:18px;width:3px;height:3px;background:#35b56f;box-shadow:6px 0 0 #35b56f"></div>
  <div class="abs" style="left:249px;top:38px;width:40px;height:2px;background:#76b9ed"></div>
  <!-- pink cat -->
  <div class="abs" style="left:306px;top:8px;width:24px;height:24px;border-radius:50%;background:#c98ad8"></div>
  <svg class="abs" style="left:310px;top:12px" width="16" height="16" viewBox="0 0 16 16"><path d="M2 2l3 3h6l3-3v8a6 5 0 0 1-12 0z" fill="#fdeef6"/><circle cx="5.800" cy="8.500" r="1" fill="#7a4a90"/><circle cx="10.200" cy="8.500" r="1" fill="#7a4a90"/></svg>
  <div class="abs" style="left:298px;top:38px;width:40px;height:2px;background:#76b9ed"></div>
  <!-- chrome (active) -->
  <div class="abs" style="left:343px;top:0;width:48px;height:40px;background:#33434f"></div>
  <div class="abs" style="left:355px;top:8px;width:24px;height:24px;border-radius:50%;background:conic-gradient(from -30deg,#e44b3c 0 120deg,#f7c940 120deg 240deg,#3faf5a 240deg 360deg)"></div>
  <div class="abs" style="left:361px;top:14px;width:12px;height:12px;border-radius:50%;background:#4a8cf0;border:2px solid #fdfdff"></div>
  <div class="abs" style="left:343px;top:38px;width:48px;height:2px;background:#76b9ed"></div>
  <!-- intellij -->
  <div class="abs" style="left:404px;top:8px;width:24px;height:24px;border-radius:3px;background:linear-gradient(135deg,#f9652d 0 35%,#e0347c 35% 60%,#2b7be8 60%)"></div>
  <div class="abs" style="left:408px;top:11px;width:16px;height:16px;background:#0a0a0a;color:#fff;font-size:9px;font-weight:700;line-height:12px;padding-left:2px">IJ</div>
  <div class="abs" style="left:410px;top:23px;width:7px;height:1.500px;background:#fff"></div>
  <div class="abs" style="left:397px;top:38px;width:40px;height:2px;background:#76b9ed"></div>
  <!-- db -->
  <svg class="abs" style="left:455px;top:8px" width="18" height="24" viewBox="0 0 18 24"><path d="M1 4v16c0 2 3.500 3.500 8 3.500s8-1.500 8-3.500V4z" fill="#b8bcc2"/><ellipse cx="9" cy="4" rx="8" ry="3.500" fill="#dfe2e6"/><path d="M4 20 14 8" stroke="#8a8f98" stroke-width="1.500"/></svg>
  <div class="abs" style="left:445px;top:38px;width:40px;height:2px;background:#76b9ed"></div>
  <!-- cmd -->
  <div class="abs" style="left:502px;top:11px;width:22px;height:18px;background:#0a0a0a;border:1px solid #9a9a9a;border-top:3px solid #c8c8c8"></div>
  <div class="abs" style="left:505px;top:16px;font-family:'Liberation Mono',monospace;font-size:6px;color:#ddd;line-height:7px;white-space:nowrap">C:\_</div>
  <div class="abs" style="left:494px;top:38px;width:40px;height:2px;background:#76b9ed"></div>

  <!-- tray -->
  <div class="abs" style="left:1601px;top:10px;width:17px;height:17px;border-radius:4px;background:linear-gradient(160deg,#f0803a,#d8431f);transform:rotate(-12deg);color:#fff;font-size:14px;font-weight:700;line-height:17px;text-align:center;font-style:italic">S</div>
  <svg class="abs" style="left:1646px;top:15px" width="12" height="8" viewBox="0 0 12 8" fill="none" stroke="#fff" stroke-width="1.300"><path d="M1 7l5-5.500L11 7"/></svg>
  <svg class="abs" style="left:1668px;top:11px" width="17" height="16" viewBox="0 0 17 16" fill="none" stroke="#fff" stroke-width="1.200"><rect x="1" y="1.500" width="13" height="10"/><path d="M4 14.500h7M5 9l4-5M6 4h3v3"/><circle cx="13.500" cy="12" r="2.500" fill="#d93848" stroke="none"/></svg>
  <svg class="abs" style="left:1691px;top:12px" width="17" height="15" viewBox="0 0 17 15" fill="none" stroke="#fff" stroke-width="1.200"><rect x="4" y="1" width="12" height="9"/><path d="M7 13.500h6M10 10v3.500M1 3v10h3"/></svg>
  <svg class="abs" style="left:1714px;top:11px" width="17" height="16" viewBox="0 0 17 16" fill="none" stroke="#fff" stroke-width="1.200"><path d="M1 5.500h3l4-4v13l-4-4H1z"/><path d="M10.500 5.500a3.500 3.500 0 0 1 0 5M12.500 3.500a6.500 6.500 0 0 1 0 9" opacity=".9"/></svg>
  <div class="abs" style="left:1739px;top:11px;font-size:15px;line-height:17px;color:#fff;font-weight:500">中</div>
  <div class="abs" style="left:1768px;top:10px;width:17px;height:17px;border-radius:4px;background:linear-gradient(160deg,#f0803a,#d8431f);transform:rotate(-12deg);color:#fff;font-size:14px;font-weight:700;line-height:17px;text-align:center;font-style:italic">S</div>
  <div class="abs" style="left:1800px;top:4px;width:60px;text-align:center;font-size:12.400px;line-height:15px;color:#fff">17:06</div>
  <div class="abs" style="left:1794px;top:23px;width:72px;text-align:center;font-size:12.400px;letter-spacing:.5px;line-height:15px;color:#fff">2026/1/16</div>
  <svg class="abs" style="left:1878px;top:11px" width="18" height="17" viewBox="0 0 18 17" fill="#fff"><path d="M1 1h16v12H8l-4 3.500V13H1z"/><path d="M4 4.500h10M4 7h10M4 9.500h7" stroke="#0a1728" stroke-width="1"/></svg>
  <div class="abs" style="left:1889px;top:21px;width:13px;height:13px;border-radius:50%;background:#5a6068;border:1px solid #9aa0a8;color:#fff;font-size:9px;line-height:11px;text-align:center">1</div>
  <div class="abs" style="left:1915px;top:0;width:1px;height:40px;background:#4a5360"></div>

</div>

<!-- timer bubble -->
<div class="abs" style="left:1700px;top:27px;width:51px;height:50px;border-radius:50%;background:linear-gradient(180deg,#3a80de 0%,#4a9aea 50%,#62baf2 100%);border:2px solid #e6f6ff;box-shadow:0 0 3px 1px rgba(160,210,255,.5);color:#d6ecfb;font-size:13.500px;line-height:47px;text-align:center">05:46</div>
<!-- page floating icon -->
<div class="abs" style="left:1187px;top:995px;width:16px;height:29px;border-radius:4px;background:#fdfdff"></div>
<svg class="abs" style="left:1182px;top:1002px" width="15" height="15" viewBox="0 0 17 18"><ellipse cx="5" cy="9" rx="4.500" ry="7.500" fill="#d66bd0"/><ellipse cx="12" cy="9" rx="4.500" ry="7.500" fill="#7a6fe8"/><ellipse cx="8.500" cy="9" rx="2" ry="7" fill="#f08ab8" opacity=".8"/></svg>
<div class="abs" style="left:999px;top:828px;width:7px;height:7px;border-radius:50%;background:#4b3fd8"></div>
<!-- EV watermark -->
<svg class="abs" style="left:1336px;top:930px" width="96" height="106" viewBox="0 0 96 106">
  <path d="M14.500 17 78.500 53 14.500 89z" fill="rgba(250,250,255,.12)" stroke="#f8f8fe" stroke-width="15" stroke-linejoin="round"/>
<path d="M9 17v72" stroke="#e6e6f4" stroke-width="3" stroke-linecap="round" opacity=".7" fill="none"/></svg>
<div class="abs" style="left:1447px;top:911px;font-size:116px;line-height:130px;color:#fdfdff;font-weight:400;letter-spacing:2px;white-space:nowrap;font-family:'Liberation Sans',sans-serif;-webkit-text-stroke:1.600px #fdfdff">ev</div>
<div class="abs" style="left:1579px;top:942px;font-size:72px;line-height:84px;color:#fdfdff;font-weight:700;white-space:nowrap;letter-spacing:6px">剪辑</div>

</body>
</html>
